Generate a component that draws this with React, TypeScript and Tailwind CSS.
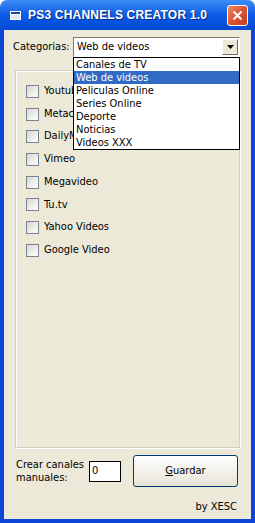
import React from "react";

const channels = [
  "Youtube",
  "Metacafe",
  "DailyMotion",
  "Vimeo",
  "Megavideo",
  "Tu.tv",
  "Yahoo Videos",
  "Google Video",
];

const categories = [
  "Canales de TV",
  "Web de videos",
  "Peliculas Online",
  "Series Online",
  "Deporte",
  "Noticias",
  "Videos XXX",
];

const font = "font-['Tahoma','DejaVu_Sans_Condensed','Liberation_Sans',sans-serif]";

function Checkbox() {
  return (
    <span className="block h-[13px] w-[13px] shrink-0 border border-[#7a8490] bg-gradient-to-br from-[#d8d8d0] to-[#ffffff]" />
  );
}

export default function App() {
  return (
    <div className={`relative flex h-[523px] w-[255px] flex-col bg-white text-[11px] text-black ${font}`}>
      {/* title bar */}
      <div className="flex h-[30px] shrink-0 items-center rounded-t-[7px] bg-gradient-to-b from-[#3d8cf7] via-[#0a5ae6] to-[#0649d4] pl-[10px] pr-[7px]">
        <svg width="11" height="9" viewBox="0 0 11 9" className="mr-[7px]">
          <rect x="0" y="0" width="11" height="9" fill="#ffffff" />
          <rect x="1" y="1" width="9" height="2" fill="#1c3f9a" />
          <rect x="1" y="4" width="9" height="4" fill="#dfe6f5" />
        </svg>
        <span className="flex-1 text-[12px] font-bold tracking-[0.2px] text-white [text-shadow:1px_1px_0_#0a2a80] font-['Liberation_Sans',sans-serif]">
          PS3 CHANNELS CREATOR 1.0
        </span>
        <div className="flex h-[21px] w-[21px] items-center justify-center rounded-[3px] border border-white bg-gradient-to-br from-[#e98a6c] via-[#dd5230] to-[#c2401f]">
          <svg width="11" height="11" viewBox="0 0 11 11">
            <path d="M1.5 1.5 L9.5 9.5 M9.5 1.5 L1.5 9.5" stroke="#ffffff" strokeWidth="2" />
          </svg>
        </div>
      </div>

      {/* window body */}
      <div className="flex flex-1 flex-col border-x-4 border-b-4 border-[#0b46d6] bg-[#ece9d8]">
        <div className="flex items-center pl-[9px] pt-[7px]">
          <span className="w-[60px]">Categorias:</span>
          <div className="relative flex h-[20px] w-[167px] items-center border border-t-[#7f7d71] border-l-[#7f7d71] border-r-[#ffffff] border-b-[#ffffff] bg-white">
            <span className="flex-1 pl-[3px]">Web de videos</span>
            <div className="mr-[1px] flex h-[16px] w-[16px] items-center justify-center border border-t-[#ffffff] border-l-[#ffffff] border-r-[#716f64] border-b-[#716f64] bg-[#ece9d8]">
              <svg width="7" height="4" viewBox="0 0 7 4">
                <path d="M0 0 H7 L3.5 4 Z" fill="#000" />
              </svg>
            </div>
          </div>
        </div>

        {/* group box */}
        <div className="ml-[11px] mt-[13px] h-[378px] w-[225px] border border-[#d0d0bf] shadow-[inset_1px_1px_0_#ffffff,1px_1px_0_#ffffff]">
          <div className="flex flex-col pl-[10px] pt-[9px]">
            {channels.map((c) => (
              <div key={c} className="flex h-[22.7px] items-center gap-[5px]">
                <Checkbox />
                <span>{c}</span>
              </div>
            ))}
          </div>
        </div>

        {/* bottom controls */}
        <div className="mt-[7px] flex items-center pl-[12px]">
          <span className="w-[73px] leading-[13px]">
            Crear canales
            <br />
            manuales:
          </span>
          <div className="flex h-[21px] w-[32px] items-center border border-black bg-white pl-[2px]">0</div>
          <button className="ml-[12px] flex h-[32px] w-[105px] items-center justify-center rounded-[3px] border border-[#003c74] bg-gradient-to-b from-[#ffffff] to-[#e6e3d6] text-[11px]">
            <span>
              <span className="underline">G</span>uardar
            </span>
          </button>
        </div>

        <div className="mt-[12px] pr-[14px] text-right">by XESC</div>
      </div>

      {/* open dropdown list */}
      <div className="absolute left-[73px] top-[57px] w-[167px] border border-black bg-white">
        {categories.map((c, i) => (
          <div
            key={c}
            className={`h-[13px] pl-[2px] leading-[13px] ${i === 1 ? "bg-[#316ac5] text-white" : ""}`}
          >
            {c}
          </div>
        ))}
      </div>
    </div>
  );
}
